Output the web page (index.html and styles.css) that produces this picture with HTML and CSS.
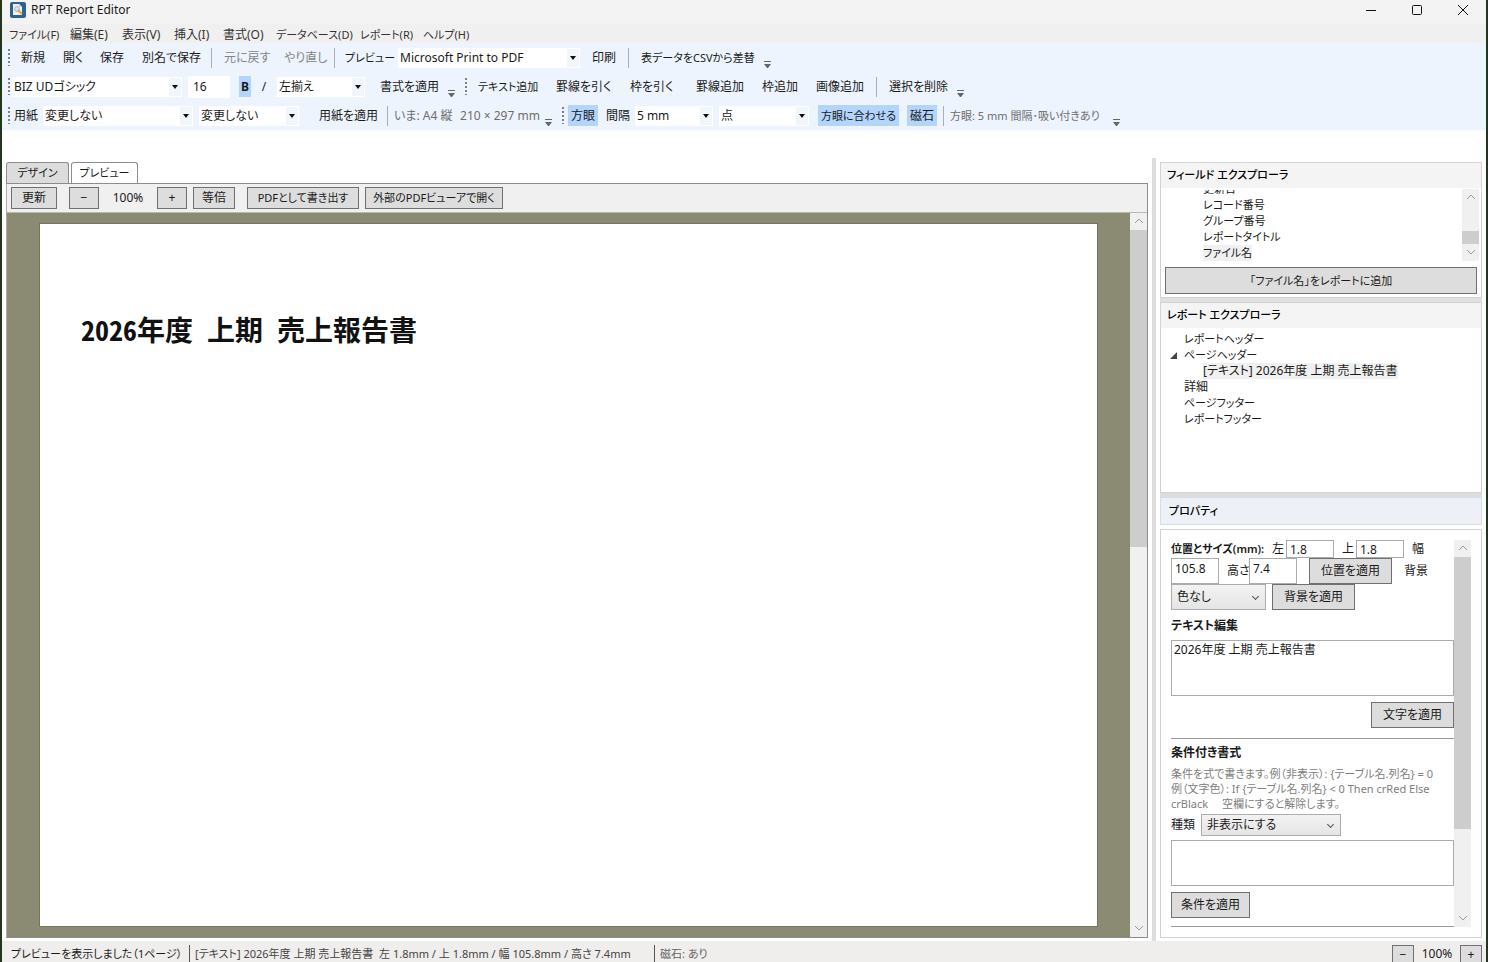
FILE: index.html
```html
<!DOCTYPE html>
<html lang="ja">
<head>
<meta charset="utf-8">
<title>RPT Report Editor</title>
<link rel="stylesheet" href="styles.css">
</head>
<body>
<div class="window">
  <header class="titlebar">
    <svg class="app-icon" width="16" height="16" viewBox="0 0 16 16"><rect width="16" height="16" rx="2" fill="#2d6292"/><path d="M3 2h6l3 3v8H3z" fill="#f4f1e8"/><path d="M9 2v3h3z" fill="#c9d6de"/><circle cx="7" cy="7" r="2.500" fill="#cfe6f3" stroke="#a9bfce"/><path d="M8 8l4 4" stroke="#e1a64a" stroke-width="2"/></svg>
    <h1 class="app-title">RPT Report Editor</h1>
    <div class="window-buttons">
      <button aria-label="最小化"><svg width="12" height="12" viewBox="0 0 12 12"><path d="M1 6.500h10"/></svg></button>
      <button aria-label="最大化"><svg width="12" height="12" viewBox="0 0 12 12"><rect x="1.500" y="1.500" width="9" height="9" rx="1"/></svg></button>
      <button aria-label="閉じる"><svg width="12" height="12" viewBox="0 0 12 12"><path d="M1 1l10 10M11 1L1 11"/></svg></button>
    </div>
  </header>
  <nav class="menubar">
    <button class="m-file small">ファイル(F)</button><button class="m-edit">編集(E)</button><button class="m-edit">表示(V)</button><button class="m-ins">挿入(I)</button><button class="m-fmt">書式(O)</button><button class="m-db small">データベース(D)</button><button class="m-rep small">レポート(R)</button><button class="m-rep small">ヘルプ(H)</button>
  </nav>
  <div class="tray">
    <div class="band">
      <div class="toolbar">
        <i class="grip"></i>
        <button class="tool">新規</button><button class="tool w37">開く</button><button class="tool">保存</button><button class="tool w75">別名で保存</button>
        <i class="sep"></i>
        <button class="tool w60" disabled>元に戻す</button><button class="tool w56" disabled>やり直し</button>
        <i class="sep"></i>
        <button class="tool w60 preview-tool small">プレビュー</button>
        <span class="combo w182"><select aria-label="プリンター"><option>Microsoft Print to PDF</option></select></span>
        <button class="tool after-combo">印刷</button>
        <i class="sep"></i>
        <button class="tool w127 small">表データをCSVから差替</button>
        <i class="more"></i>
      </div>
    </div>
    <div class="band">
      <div class="toolbar">
        <i class="grip"></i>
        <span class="combo w170"><select aria-label="フォント"><option>BIZ UDゴシック</option></select></span>
        <input class="size-box" aria-label="文字サイズ" value="16">
        <button class="toggle bold" aria-pressed="true">B</button>
        <button class="toggle slash">/</button>
        <span class="combo w88"><select aria-label="揃え"><option>左揃え</option></select></span>
        <button class="tool w72">書式を適用</button>
        <i class="more"></i>
      </div>
      <div class="toolbar">
        <i class="grip"></i>
        <button class="tool w78 small">テキスト追加</button><button class="tool w74">罫線を引く</button><button class="tool w66">枠を引く</button><button class="tool w66">罫線追加</button><button class="tool">枠追加</button><button class="tool">画像追加</button>
        <i class="sep"></i>
        <button class="tool w72">選択を削除</button>
        <i class="more"></i>
      </div>
    </div>
    <div class="band">
      <div class="toolbar">
        <i class="grip"></i>
        <label class="tool-label paper-label" for="paper">用紙</label>
        <span class="combo w150"><select id="paper"><option>変更しない</option></select></span>
        <span class="combo w100"><select aria-label="用紙の向き"><option>変更しない</option></select></span>
        <button class="tool w74 paper-apply">用紙を適用</button>
        <i class="sep"></i>
        <span class="hint w63">いま: A4 縦</span><span class="hint">210 × 297 mm</span>
        <i class="more"></i>
      </div>
      <div class="toolbar">
        <i class="grip"></i>
        <button class="toggle grid-toggle" aria-pressed="true">方眼</button>
        <label class="tool-label" for="grid">間隔</label>
        <span class="combo w78"><select id="grid"><option>5 mm</option></select></span>
        <span class="combo w90"><select aria-label="方眼の種類"><option>点</option></select></span>
        <button class="toggle snap small" aria-pressed="true">方眼に合わせる</button>
        <button class="toggle magnet" aria-pressed="true">磁石</button>
        <i class="sep"></i>
        <span class="hint w160 small">方眼: 5 mm 間隔･吸い付きあり</span>
        <i class="more"></i>
      </div>
    </div>
  </div>

  <main class="workspace">
    <section class="document">
      <div class="tabs" role="tablist">
        <button class="tab" role="tab">デザイン</button>
        <button class="tab active" role="tab" aria-selected="true">プレビュー</button>
      </div>
      <div class="preview">
        <div class="preview-bar">
          <button class="btn w46">更新</button>
          <button class="btn w30 lead">−</button>
          <output class="zoom">100%</output>
          <button class="btn w30">+</button>
          <button class="btn w42">等倍</button>
          <button class="btn w112 lead small">PDFとして書き出す</button>
          <button class="btn w138 small">外部のPDFビューアで開く</button>
        </div>
        <div class="viewport">
          <div class="canvas">
            <article class="page">
              <h2 class="report-title"><span>2026年度</span> <span>上期</span> <span>売上報告書</span></h2>
            </article>
          </div>
          <div class="scrollbar">
            <svg viewBox="0 0 17 17"><path d="M5 10l4-4 4 4"/></svg>
            <div class="track"><div class="thumb thumb-doc"></div></div>
            <svg viewBox="0 0 17 17"><path d="M5 6l4 4 4-4"/></svg>
          </div>
        </div>
      </div>
    </section>

    <aside class="side">
      <section class="panel fields">
        <h3 class="panel-title">フィールド エクスプローラ</h3>
        <div class="field-body">
          <ul class="field-list">
            <li>更新日</li><li>レコード番号</li><li>グループ番号</li><li>レポートタイトル</li><li><span class="picked">ファイル名</span></li>
          </ul>
          <div class="scrollbar">
            <svg viewBox="0 0 17 17"><path d="M5 10l4-4 4 4"/></svg>
            <div class="track end"><div class="thumb thumb-field"></div></div>
            <svg viewBox="0 0 17 17"><path d="M5 6l4 4 4-4"/></svg>
          </div>
        </div>
        <button class="btn add-field small">「ファイル名」をレポートに追加</button>
      </section>
      <section class="panel report">
        <h3 class="panel-title">レポート エクスプローラ</h3>
        <ul class="tree">
          <li class="small">レポートヘッダー</li>
          <li class="open"><span class="small">ページヘッダー</span>
            <ul><li><span class="picked">[テキスト] 2026年度 上期 売上報告書</span></li></ul>
          </li>
          <li>詳細</li>
          <li class="small">ページフッター</li>
          <li class="small">レポートフッター</li>
        </ul>
      </section>
      <h3 class="prop-title">プロパティ</h3>
      <section class="panel props">
        <div class="prop-body">
          <div class="prop-row">
            <strong class="pos-label small">位置とサイズ(mm):</strong>
            <label for="left">左</label><input id="left" value="1.8">
            <label class="gap" for="top">上</label><input id="top" value="1.8">
            <label class="gap" for="width">幅</label>
          </div>
          <div class="prop-row tall">
            <input id="width" value="105.8">
            <label class="gap" for="height">高さ</label><input id="height" value="7.4">
            <button class="btn w83 pos-apply">位置を適用</button>
            <label for="back">背景</label>
          </div>
          <div class="prop-row tall">
            <span class="drop w95"><select id="back"><option>色なし</option></select></span>
            <button class="btn w83 back-apply">背景を適用</button>
          </div>
          <label class="heading" for="text">テキスト編集</label>
          <textarea id="text" class="text-edit">2026年度 上期 売上報告書</textarea>
          <button class="btn w83 text-apply">文字を適用</button>
          <hr>
          <label class="heading cond" for="cond">条件付き書式</label>
          <p class="help">条件を式で書きます。例（非表示）: {テーブル名.列名} = 0<br>例（文字色）: If {テーブル名.列名} &lt; 0 Then crRed Else<br>crBlack　 空欄にすると解除します。</p>
          <div class="kind-row">
            <label for="kind">種類</label>
            <span class="drop w140"><select id="kind"><option>非表示にする</option></select></span>
          </div>
          <textarea id="cond" class="cond-edit"></textarea>
          <button class="btn w79 cond-apply">条件を適用</button>
          <hr>
        </div>
        <div class="scrollbar">
          <svg viewBox="0 0 17 17"><path d="M5 10l4-4 4 4"/></svg>
          <div class="track"><div class="thumb thumb-prop"></div></div>
          <svg viewBox="0 0 17 17"><path d="M5 6l4 4 4-4"/></svg>
        </div>
      </section>
    </aside>
  </main>

  <footer class="status">
    <span class="status-message small">プレビューを表示しました（1ページ）</span>
    <span class="status-item status-pos small">[テキスト] 2026年度 上期 売上報告書&nbsp; 左 1.8mm / 上 1.8mm / 幅 105.8mm / 高さ 7.4mm</span>
    <span class="status-item muted small">磁石: あり</span>
    <div class="status-zoom"><button class="btn">−</button><output>100%</output><button class="btn">+</button></div>
  </footer>
</div>
</body>
</html>
```
FILE: styles.css
```css
* { box-sizing: border-box; }
body {
  margin: 0;
  background: #22351f;
  color: #1a1a1a;
  font: 12px/16px "Noto Sans", "Noto Sans CJK JP", sans-serif;
  font-feature-settings: "palt";
}
button, input, select, textarea {
  margin: 0;
  padding: 0;
  border: 0;
  border-radius: 0;
  background: none;
  color: inherit;
  font: inherit;
  font-feature-settings: inherit;
  white-space: nowrap;
}
select { appearance: none; }
ul, h1, h2, h3, p { margin: 0; padding: 0; font-size: inherit; }
ul { list-style: none; }
.small { font-size: 11px; }

.window {
  display: flex;
  flex-direction: column;
  height: 100vh;
  margin: 0 2px;
  overflow: hidden;
  background: #fff;
}

/* Title bar and menu */
.titlebar { display: flex; align-items: center; flex: 0 0 24px; padding: 0 8px 5px; background: #f3f3f3; }
.app-title { margin-left: 5px; font-weight: 400; }
.window-buttons { display: flex; margin-left: auto; gap: 1px; }
.window-buttons button { display: grid; place-items: center; width: 45px; height: 18px; }
.window-buttons button:last-child { margin-right: -7px; }
.window-buttons svg { fill: none; stroke: #111; }
.menubar { display: flex; flex: 0 0 19px; min-height: 0; padding: 1px 0 0 7px; background: #f0f0f0; color: #333; }
.menubar button { text-align: left; height: 19px; }
.m-file { width: 61px; }
.m-edit { width: 52px; }
.m-ins { width: 49px; }
.m-fmt { width: 53px; }
.m-db { width: 84px; }
.m-rep { width: 63px; }

/* Toolbars */
.tray { flex: none; background: #edf4fd; }
.band { display: flex; height: 29px; }
.toolbar { display: flex; align-items: center; padding-left: 6px; }
.toolbar > * { flex: none; }
.grip { width: 2px; height: 17px; margin-right: 2px; background: repeating-linear-gradient(#7d8288 0 2px, transparent 2px 4px); }
.sep { width: 1px; height: 20px; margin: 0 3px; background: #a9aeb5; }
.tool { height: 22px; padding: 0 9px; }
.tool:disabled { color: #838383; }
.tool[class*=" w"] { padding-right: 0; text-align: left; }
.tool.preview-tool { padding-left: 7px; }
.more { align-self: flex-end; width: 7px; height: 7px; margin: 0 4px 4px 5px; border-top: 1px solid #666; }
.more::after { content: ""; display: block; margin-top: 2px; border: solid transparent; border-width: 4px 3px 0; border-top-color: #666; }
.combo { display: flex; align-items: center; height: 20px; margin-right: 6px; border: 1px solid #fff; background: #fff; }
.combo select { flex: 1; min-width: 0; height: 18px; padding-left: 1px; }
.combo::after { content: ""; margin-left: -9px; border: solid transparent; border-width: 4px 3px 0; border-top-color: #111; margin-right: 3px; pointer-events: none; }
.combo select { background: linear-gradient(90deg, transparent calc(100% - 12px), #f1f6fd 0); }
.after-combo { padding-left: 6px; }
.size-box { width: 42px; height: 22px; margin-right: 9px; padding-left: 5px; background: #fff; }
.toggle { height: 21px; margin-right: 9px; padding: 0 3px; }
.toggle[aria-pressed] { background: #b3d5fb; }
.toggle.bold { width: 12px; padding: 0; font-weight: 700; }
.toggle.slash { width: 8px; padding: 0; }
.toggle.grid-toggle { margin-left: 2px; margin-right: 8px; }
.toggle.snap { margin: 0 8px 0 3px; }
.toggle.magnet { margin-right: 3px; }
.tool-label { margin-right: 5px; }
.paper-label { margin-left: 2px; }
.paper-apply { margin-left: 5px; }
.hint { color: #6d6d6d; margin-left: 3px; }

.w30 { width: 30px; }
.w37 { width: 37px; }
.w42 { width: 42px; }
.w46 { width: 46px; }
.w56 { width: 56px; }
.w60 { width: 60px; }
.w63 { width: 63px; }
.w66 { width: 66px; }
.w72 { width: 72px; }
.w74 { width: 74px; }
.w75 { width: 75px; }
.w78 { width: 78px; }
.w79 { width: 79px; }
.w83 { width: 83px; }
.w88 { width: 88px; }
.w90 { width: 90px; }
.w95 { width: 95px; }
.w100 { width: 100px; }
.w112 { width: 112px; }
.w127 { width: 127px; }
.w138 { width: 138px; }
.w140 { width: 140px; }
.w150 { width: 150px; }
.w160 { width: 158px; }
.w170 { width: 170px; }
.w182 { width: 182px; }

.btn { height: 22px; border: 1px solid #707070; background: #ddd; }

/* Document area */
.workspace { display: flex; flex: 1; min-height: 0; padding: 28px 4px 0; }
.document { display: flex; flex: 1; flex-direction: column; min-width: 0; margin: 4px 4px 3px 0; }
.tabs { display: flex; gap: 2px; height: 21px; }
.tab { width: 63px; border: 1px solid #8c8c8c; border-bottom: 0; border-radius: 3px 3px 0 0; background: #dcdcdc; font-size: 11px; }
.tab.active { width: 67px; background: #fff; }
.preview { display: flex; flex: 1; flex-direction: column; min-height: 0; border: 1px solid #8c8c8c; border-left-color: #aaa; }
.preview-bar { display: flex; align-items: center; gap: 6px; flex: 0 0 29px; padding-left: 4px; border-bottom: 1px solid #b8bba8; background: #f0f0f0; }
.lead { margin-left: 6px; }
.zoom { width: 46px; text-align: center; }
.viewport { display: flex; flex: 1; min-height: 0; }
.canvas { flex: 1; display: flex; padding: 10px 32px; background: #8b8b73; }
.page { flex: 1; padding: 86px 41px; border: 1px solid #74745f; background: #fff; }
.report-title { display: flex; gap: 14px; color: #111; font: 700 28px/38px "Noto Sans CJK JP", sans-serif; font-feature-settings: "hwid"; }

.scrollbar { display: flex; flex: 0 0 17px; flex-direction: column; background: #f0f0f0; }
.scrollbar svg { flex: none; width: 17px; height: 17px; fill: none; stroke: #999; }
.track { display: flex; flex: 1; flex-direction: column; }
.track.end { justify-content: flex-end; }
.thumb { background: #cdcdcd; }
.thumb-doc { height: 46%; }
.thumb-field { height: 13px; }
.thumb-prop { height: 77%; }

/* Side panels */
.side { display: flex; flex: 0 0 330px; flex-direction: column; padding: 4px 0 3px 4px; border-left: 4px solid #ddd; }
.panel { border: 1px solid #d0d3d6; background: #fff; }
.panel-title { height: 25px; padding: 4px 6px; background: #f4f4f4; color: #000; font-size: 11px; font-weight: 500; }
.fields { height: 136px; }
.field-body { display: flex; height: 75px; padding: 1px 2px 2px 42px; }
.field-list { display: flex; flex: 1; flex-direction: column; justify-content: flex-end; overflow: hidden; height: 71px; margin-top: 1px; font-size: 11px; }
.field-list li { flex: 0 0 16px; }
.picked { display: inline-block; background: #f0f0f0; }
.add-field { width: calc(100% - 8px); height: 27px; margin: 4px 4px 0; }
.report { height: 191px; margin-top: 4px; box-shadow: 0 -4px #e0e0e0; }
.tree { padding: 3px 23px; }
.tree li { line-height: 16px; }
.tree ul { padding-left: 19px; }
.open { position: relative; }
.open::before { content: ""; position: absolute; left: -14px; top: 5px; border: solid transparent; border-width: 0 0 7px 7px; border-bottom-color: #444; }
.prop-title { height: 28px; margin-top: 4px; padding: 5px 8px; border: 1px solid #d5dde6; background: #edf1f7; box-shadow: 0 -4px #ddd; color: #000; font-size: 11px; font-weight: 500; }
.props { display: flex; flex: 1; min-height: 0; margin-top: 4px; padding: 10px; }
.prop-body { flex: 1; min-width: 0; overflow: hidden; }
.prop-row { display: flex; height: 18px; }
.prop-row.tall { height: 26px; }
.prop-row input { width: 48px; height: 100%; padding-left: 3px; border: 1px solid #ababab; }
.tall input { padding-bottom: 6px; }
.prop-row label { width: 14px; padding-top: 1px; white-space: nowrap; }
.prop-row label.gap { width: 22px; padding-left: 8px; }
.prop-row.tall label, .prop-row.tall label.gap { padding-top: 5px; }
.prop-row.tall label.gap { width: 30px; }
.pos-label { width: 101px; padding-top: 1px; font-weight: 600; white-space: nowrap; }
.prop-row .btn { height: 26px; }
.pos-apply { margin: 0 12px; }
.back-apply { margin-left: 6px; }
.heading { display: block; height: 30px; padding-top: 8px; font-weight: 600; }
textarea { display: block; width: 100%; padding: 1px 2px; border: 1px solid #ababab; resize: none; }
.text-edit { height: 56px; }
.text-apply { display: block; height: 26px; margin: 6px 0 0 auto; }
hr { height: 1px; margin: 10px 0 0; border: 0; background: #999; }
.cond { height: 27px; padding-top: 6px; }
.help { color: #808080; font-size: 11px; line-height: 15px; white-space: nowrap; }
.kind-row { display: flex; align-items: center; gap: 6px; margin: 3px 0 4px; }
.drop { display: flex; align-items: center; height: 22px; border: 1px solid #acacac; background: linear-gradient(#f2f2f2, #e5e5e5); }
.tall .drop { height: 26px; }
.drop select { flex: 1; min-width: 0; padding-left: 5px; }
.drop::after { content: ""; width: 4px; height: 4px; margin: 0 7px 2px -11px; border: solid #555; border-width: 0 1px 1px 0; transform: rotate(45deg); pointer-events: none; }
.cond-edit { height: 46px; }
.cond-apply { height: 26px; margin-top: 6px; }
.cond-apply + hr { margin-top: 8px; }

/* Status bar */
.status { display: flex; flex: 0 0 21px; align-items: flex-start; min-height: 0; padding: 4px 4px 0 9px; background: #f0eeed; white-space: nowrap; }
.status > span { padding-top: 1px; }
.status-message { width: 178px; }
.status-item { height: 20px; padding: 0 5px; border-left: 1px solid #555; color: #444; }
.status-pos { width: 465px; }
.status-item.muted { color: #666; }
.status-zoom { display: flex; margin-left: auto; }
.status-zoom .btn { width: 22px; height: 20px; }
.status-zoom output { width: 46px; padding-top: 1px; text-align: center; }
```
